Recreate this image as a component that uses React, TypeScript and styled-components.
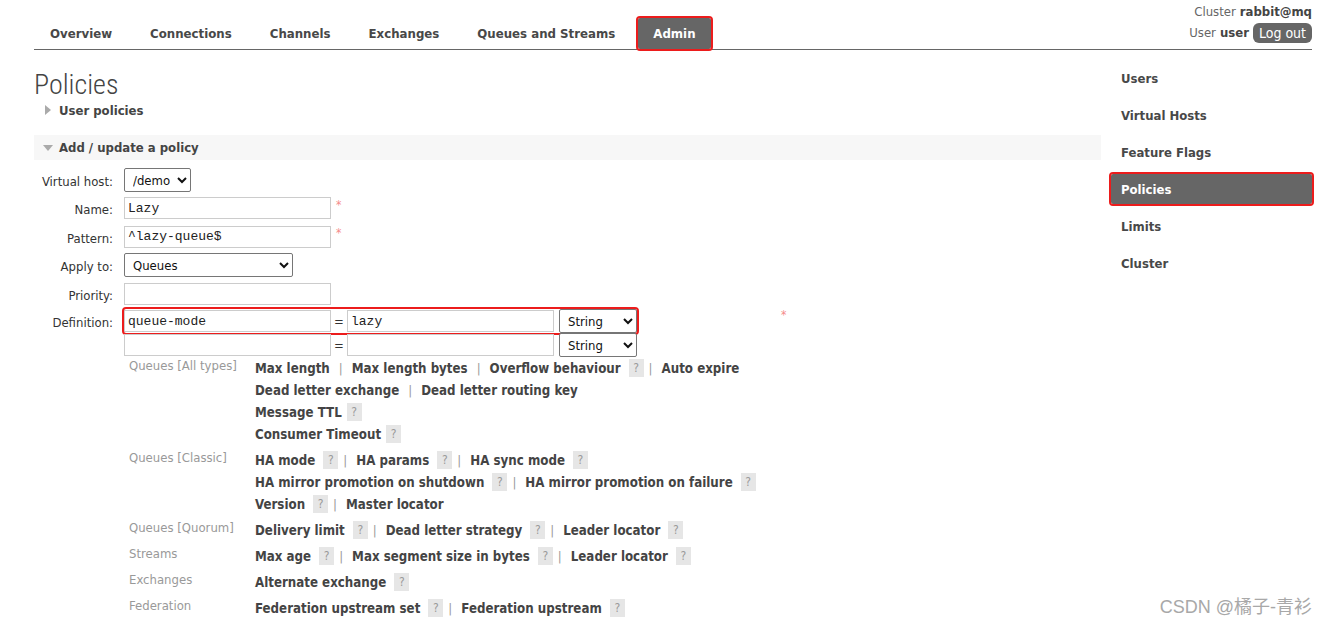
import React from 'react';
import styled, { createGlobalStyle } from 'styled-components';

const GlobalStyle = createGlobalStyle`
  html, body { margin: 0; padding: 0; background: #fff; }
  body {
    font-family: "DejaVu Sans Condensed", "DejaVu Sans", sans-serif;
    font-stretch: semi-condensed;
    font-size: 13px;
    color: #444;
  }
  * { box-sizing: border-box; }
`;

const RED = '#ec1c1c';

const Page = styled.div`
  position: relative;
  height: 625px;
  overflow: hidden;
  padding: 0 16px 0 34px;
`;

const Header = styled.header`
  display: flex;
  justify-content: space-between;
  align-items: stretch;
  height: 50px;
  border-bottom: 1px solid #666;
`;

const Nav = styled.ul`
  display: flex;
  align-items: flex-end;
  gap: 8px;
  margin: 0 0 0 1px;
  padding: 0;
  list-style: none;
`;

const Tab = styled.li<{ $active?: boolean }>`
  height: 31px;
  display: flex;
  align-items: center;
  padding: 0 15px;
  font-weight: 700;
  font-size: 13.1px;
  color: ${(p) => (p.$active ? '#fff' : '#484848')};
  background: ${(p) => (p.$active ? '#666' : 'transparent')};
  outline: ${(p) => (p.$active ? `2px solid ${RED}` : 'none')};
  outline-offset: 0;
  border-radius: 2px;
`;

const UserInfo = styled.div`
  display: flex;
  flex-direction: column;
  align-items: flex-end;
  padding-top: 3px;
  gap: 4px;
`;

const InfoLine = styled.div`
  height: 17px;
  display: flex;
  align-items: center;
  gap: 4px;
  color: #666;
  font-size: 13px;
  b { color: #444; }
`;

const LogOut = styled.button`
  height: 20px;
  padding: 0 6px;
  border: none;
  border-radius: 6px;
  background: #666;
  color: #fff;
  font-family: "DejaVu Sans Condensed", "DejaVu Sans", sans-serif;
  font-stretch: semi-condensed;
  font-size: 14px;
  line-height: 20px;
`;

const Body = styled.div`
  display: flex;
`;

const Content = styled.main`
  flex: 1;
`;

const Sidebar = styled.ul`
  width: 201px;
  margin: 0 0 0 10px;
  padding: 13px 0 0;
  list-style: none;
  display: flex;
  flex-direction: column;
  gap: 7px;
`;

const SideItem = styled.li<{ $active?: boolean }>`
  height: 30px;
  display: flex;
  align-items: center;
  padding-left: 10px;
  font-weight: 700;
  font-size: 13px;
  color: ${(p) => (p.$active ? '#fff' : '#484848')};
  background: ${(p) => (p.$active ? '#666' : 'transparent')};
  outline: ${(p) => (p.$active ? `2px solid ${RED}` : 'none')};
  border-radius: 2px;
`;

const Title = styled.h1`
  margin: 20px 0 0;
  height: 30px;
  line-height: 30px;
  font-family: Roboto, sans-serif;
  font-weight: 300;
  font-size: 28px;
  color: #444;
`;

const Toggle = styled.div<{ $shaded?: boolean }>`
  display: flex;
  align-items: center;
  height: ${(p) => (p.$shaded ? 25 : 20)}px;
  margin-top: ${(p) => (p.$shaded ? 15 : 0)}px;
  padding-left: 6px;
  gap: 4px;
  background: ${(p) => (p.$shaded ? '#f7f7f7' : 'transparent')};
  font-weight: 700;
  font-size: 13px;
  color: #444;
`;

const Arrow = styled.span`
  width: 15px;
  display: flex;
  justify-content: center;
`;

const Form = styled.div`
  margin-top: 6px;
  display: flex;
  flex-direction: column;
`;

const Row = styled.div<{ $h: number }>`
  display: flex;
  align-items: center;
  height: ${(p) => p.$h}px;
`;

const Label = styled.label`
  width: 84px;
  padding: 3px 5px 0 0;
  margin-right: 6px;
  text-align: right;
  color: #333;
  font-size: 13px;
`;

const TextInput = styled.input`
  width: 207px;
  height: 22px;
  border: 1px solid #ccc;
  padding: 0 3px;
  font-family: "Liberation Mono", monospace;
  font-size: 13px;
  color: #222;
  background: #fff;
`;

const Select = styled.select<{ $w: number }>`
  width: ${(p) => p.$w}px;
  height: 24px;
  border: 1px solid #767676;
  border-radius: 2px;
  padding: 0 4px;
  font-family: "DejaVu Sans", sans-serif;
  font-stretch: semi-condensed;
  font-size: 13px;
  color: #111;
  background: #fff;
`;

const Required = styled.span<{ $ml: number; $mt: number }>`
  align-self: flex-start;
  margin-left: ${(p) => p.$ml}px;
  margin-top: ${(p) => p.$mt}px;
  color: #f58a8a;
  font-size: 12px;
`;

const DefGroup = styled.div<{ $marked?: boolean }>`
  display: flex;
  align-items: center;
  outline: ${(p) => (p.$marked ? `2px solid ${RED}` : 'none')};
  outline-offset: 0;
  border-radius: 2px;
`;

const Eq = styled.span`
  width: 16px;
  text-align: center;
  color: #333;
`;

const Gap = styled.span`
  width: 5px;
`;

const Help = styled.div`
  margin-left: 90px;
  display: flex;
  flex-direction: column;
  gap: 4px;
`;

const HelpGroup = styled.div`
  display: flex;
`;

const Category = styled.div`
  width: 131px;
  padding-left: 5px;
  line-height: 18px;
  color: #999;
  font-size: 13px;
`;

const Lines = styled.div`
  display: flex;
  flex-direction: column;
`;

const Line = styled.div`
  height: 22px;
  display: flex;
  align-items: center;
`;

const Link = styled.span`
  font-weight: 700;
  font-size: 13.2px;
  color: #444;
`;

const Sep = styled.span<{ $after?: boolean }>`
  color: #999;
  margin: 0 9px 0 ${(p) => (p.$after ? 5 : 9)}px;
`;

const Q = styled.span<{ $gap?: number }>`
  display: inline-flex;
  align-items: center;
  justify-content: center;
  width: 15px;
  height: 18px;
  margin-left: ${(p) => p.$gap ?? 8}px;
  background: #e6e6e6;
  color: #999;
  font-size: 12px;
`;

const Watermark = styled.div`
  position: absolute;
  right: 16px;
  bottom: 7px;
  font-family: "Liberation Sans", "Noto Sans CJK SC", sans-serif;
  font-size: 18px;
  color: #a8a8a8;
`;

const RightTri = () => (
  <svg width="6" height="10" viewBox="0 0 6 10">
    <polygon points="0,0 6,5 0,10" fill="#aaa" />
  </svg>
);

const DownTri = () => (
  <svg width="10" height="6" viewBox="0 0 10 6">
    <polygon points="0,0 10,0 5,6" fill="#aaa" />
  </svg>
);

type Item = { t: string; q?: boolean; g?: number };

const helpGroups: { cat: string; lines: Item[][] }[] = [
  {
    cat: 'Queues [All types]',
    lines: [
      [{ t: 'Max length' }, { t: 'Max length bytes' }, { t: 'Overflow behaviour', q: true }, { t: 'Auto expire' }],
      [{ t: 'Dead letter exchange' }, { t: 'Dead letter routing key' }],
      [{ t: 'Message TTL', q: true, g: 5 }],
      [{ t: 'Consumer Timeout', q: true, g: 5 }],
    ],
  },
  {
    cat: 'Queues [Classic]',
    lines: [
      [{ t: 'HA mode', q: true }, { t: 'HA params', q: true }, { t: 'HA sync mode', q: true }],
      [{ t: 'HA mirror promotion on shutdown', q: true }, { t: 'HA mirror promotion on failure', q: true }],
      [{ t: 'Version', q: true }, { t: 'Master locator' }],
    ],
  },
  {
    cat: 'Queues [Quorum]',
    lines: [[{ t: 'Delivery limit', q: true }, { t: 'Dead letter strategy', q: true }, { t: 'Leader locator', q: true }]],
  },
  {
    cat: 'Streams',
    lines: [[{ t: 'Max age', q: true }, { t: 'Max segment size in bytes', q: true }, { t: 'Leader locator', q: true }]],
  },
  { cat: 'Exchanges', lines: [[{ t: 'Alternate exchange', q: true }]] },
  {
    cat: 'Federation',
    lines: [[{ t: 'Federation upstream set', q: true }, { t: 'Federation upstream', q: true }]],
  },
];

const tabs = ['Overview', 'Connections', 'Channels', 'Exchanges', 'Queues and Streams', 'Admin'];
const side = ['Users', 'Virtual Hosts', 'Feature Flags', 'Policies', 'Limits', 'Cluster'];

export default function App() {
  return (
    <Page>
      <GlobalStyle />
      <Header>
        <Nav>
          {tabs.map((t) => (
            <Tab key={t} $active={t === 'Admin'}>
              {t}
            </Tab>
          ))}
        </Nav>
        <UserInfo>
          <InfoLine>
            Cluster <b>rabbit@mq</b>
          </InfoLine>
          <InfoLine>
            User <b>user</b>
            <LogOut>Log out</LogOut>
          </InfoLine>
        </UserInfo>
      </Header>
      <Body>
        <Content>
          <Title>Policies</Title>
          <Toggle>
            <Arrow>
              <RightTri />
            </Arrow>
            User policies
          </Toggle>
          <Toggle $shaded>
            <Arrow>
              <DownTri />
            </Arrow>
            Add / update a policy
          </Toggle>
          <Form>
            <Row $h={28}>
              <Label>Virtual host:</Label>
              <Select $w={67} defaultValue="/demo">
                <option>/demo</option>
              </Select>
            </Row>
            <Row $h={28}>
              <Label>Name:</Label>
              <TextInput defaultValue="Lazy" />
              <Required $ml={5} $mt={4}>*</Required>
            </Row>
            <Row $h={29}>
              <Label>Pattern:</Label>
              <TextInput defaultValue="^lazy-queue$" />
              <Required $ml={5} $mt={4}>*</Required>
            </Row>
            <Row $h={28}>
              <Label>Apply to:</Label>
              <Select $w={169} defaultValue="Queues">
                <option>Queues</option>
              </Select>
            </Row>
            <Row $h={30}>
              <Label>Priority:</Label>
              <TextInput />
            </Row>
            <Row $h={24}>
              <Label>Definition:</Label>
              <DefGroup $marked>
                <TextInput defaultValue="queue-mode" />
                <Eq>=</Eq>
                <TextInput defaultValue="lazy" />
                <Gap />
                <Select $w={78} defaultValue="String">
                  <option>String</option>
                </Select>
              </DefGroup>
              <Required $ml={144} $mt={-1}>*</Required>
            </Row>
            <Row $h={24}>
              <Label />
              <DefGroup>
                <TextInput />
                <Eq>=</Eq>
                <TextInput />
                <Gap />
                <Select $w={78} defaultValue="String">
                  <option>String</option>
                </Select>
              </DefGroup>
            </Row>
          </Form>
          <Help>
            {helpGroups.map((g) => (
              <HelpGroup key={g.cat}>
                <Category>{g.cat}</Category>
                <Lines>
                  {g.lines.map((line, li) => (
                    <Line key={li}>
                      {line.map((it, i) => (
                        <React.Fragment key={i}>
                          {i > 0 && <Sep $after={!!line[i - 1].q}>|</Sep>}
                          <Link>{it.t}</Link>
                          {it.q && <Q $gap={it.g}>?</Q>}
                        </React.Fragment>
                      ))}
                    </Line>
                  ))}
                </Lines>
              </HelpGroup>
            ))}
          </Help>
        </Content>
        <Sidebar>
          {side.map((s) => (
            <SideItem key={s} $active={s === 'Policies'}>
              {s}
            </SideItem>
          ))}
        </Sidebar>
      </Body>
      <Watermark>CSDN @橘子-青衫</Watermark>
    </Page>
  );
}
